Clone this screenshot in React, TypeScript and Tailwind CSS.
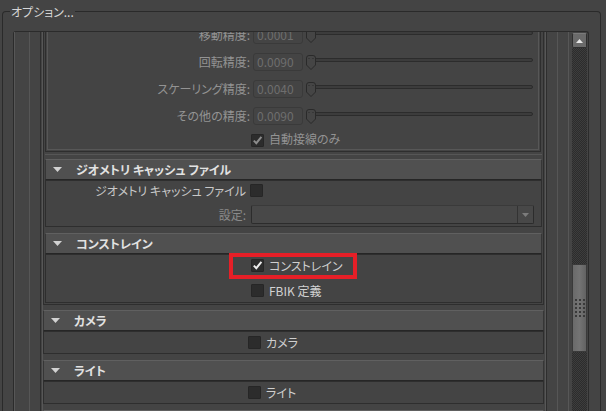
import React from "react"

const font = "font-['Noto_Sans_CJK_JP','Noto_Sans',sans-serif] [font-feature-settings:'palt']"

function Box({ checked, dim }: { checked?: boolean; dim?: boolean }) {
  return (
    <span className="flex h-[13px] w-[13px] shrink-0 items-center justify-center rounded-[1px] border border-[#262626] bg-[#2c2c2c]">
      {checked && (
        <svg width="11" height="11" viewBox="0 0 11 11">
          <path
            d="M1.8 5.6 L4.3 8.2 L9.4 1.8"
            fill="none"
            stroke={dim ? "#8c8c8c" : "#ededed"}
            strokeWidth="2"
          />
        </svg>
      )}
    </span>
  )
}

function Header({ title }: { title: string }) {
  return (
    <div className="flex h-[21px] items-center border border-[#363636] border-t-[#606060] border-b-[#262626] bg-[#505050]">
      <svg width="9" height="5" viewBox="0 0 9 5" className="ml-[7px]">
        <polygon points="0,0 9,0 4.5,5" fill="#d2d2d2" />
      </svg>
      <span className="ml-[14px] text-[12px] leading-none font-bold text-[#e2e2e2]">{title}</span>
    </div>
  )
}

function Thumb() {
  return (
    <svg width="12" height="15" viewBox="0 0 12 15" className="absolute left-0 top-[2px]">
      <path
        d="M1.5 3 Q1.5 0.5 4 0.5 H8 Q10.5 0.5 10.5 3 V10 L6 14.5 L1.5 10 Z"
        fill="#454545"
        stroke="#2a2a2a"
      />
      <rect x="3.5" y="3" width="1" height="1" fill="#2a2a2a" />
      <rect x="7.5" y="3" width="1" height="1" fill="#2a2a2a" />
    </svg>
  )
}

function PrecisionRow({ label, value }: { label: string; value: string }) {
  return (
    <div className="flex h-[27px] items-center">
      <span className="w-[202px] text-right text-[12px] leading-none text-[#939393]">{label}</span>
      <div className="ml-[3px] flex h-[18px] w-[50px] items-center rounded-[3px] border border-[#3a3a3a] pl-[3px] text-[12px] leading-none text-[#6e6e6e]">
        {value}
      </div>
      <div className="relative ml-[2px] mr-[5px] h-[18px] flex-1">
        <div className="ml-[5px] mt-[5px] h-[4px] rounded-full border border-[#2c2c2c] bg-[#3c3c3c]" />
        <Thumb />
      </div>
    </div>
  )
}

function Grip() {
  const dots = Array.from({ length: 15 })
  return (
    <div className="grid grid-cols-3 gap-[2px]">
      {dots.map((_, i) => (
        <span key={i} className="h-[2px] w-[2px] bg-[#3a3a3a]" />
      ))}
    </div>
  )
}

function ScrollBar() {
  return (
    <div className="flex w-[17px] flex-col px-[1px] pt-[1px]">
      <div className="flex h-[15px] items-center justify-center rounded-[2px] border border-[#2e2e2e] border-t-[#7a7a7a] bg-[#6a6a6a]">
        <svg width="7" height="4" viewBox="0 0 7 4">
          <polygon points="0,4 7,4 3.5,0" fill="#e6e6e6" />
        </svg>
      </div>
      <div className="h-[216px] bg-[#2f2f2f] bg-[image:repeating-conic-gradient(#2c2c2c_0_25%,#3d3d3d_0_50%)] bg-[length:2px_2px]" />
      <div className="flex h-[88px] items-center justify-center border border-[#3a3a3a] bg-[linear-gradient(90deg,#6a6a6a,#747474_50%,#626262)]">
        <Grip />
      </div>
      <div className="flex-1 bg-[#2f2f2f] bg-[image:repeating-conic-gradient(#2c2c2c_0_25%,#3d3d3d_0_50%)] bg-[length:2px_2px]" />
    </div>
  )
}

function Sections() {
  return (
    <div className="flex flex-col">
      {/* parent frame, scrolled so its top is hidden */}
      <div className="-mt-[16px] border border-[#2e2e2e] p-[1px]">
        <div className="mr-[1px] border border-[#2e2e2e] p-[1px]">
          <div className="border border-[#575757]">
            <PrecisionRow label="移動精度:" value="0.0001" />
            <PrecisionRow label="回転精度:" value="0.0090" />
            <PrecisionRow label="スケーリング精度:" value="0.0040" />
            <PrecisionRow label="その他の精度:" value="0.0090" />
            <div className="flex h-[20px] items-start pl-[203px] pt-[5px]">
              <Box checked dim />
              <span className="ml-[5px] -mt-[1px] text-[12px] leading-none text-[#939393]">自動接線のみ</span>
            </div>
          </div>
        </div>
        <div className="mt-[2px] h-[1px] bg-[#565656]" />
        <div className="mt-[4px]">
          <Header title="ジオメトリ キャッシュ ファイル" />
          <div className="border border-[#2e2e2e] pb-[2px] pt-[3px]">
            <div className="flex h-[13px] items-center">
              <span className="w-[200px] text-right text-[12px] leading-none text-[#c8c8c8]">ジオメトリ キャッシュ ファイル</span>
              <span className="ml-[4px]">
                <Box />
              </span>
            </div>
            <div className="mt-[8px] flex h-[19px] items-center">
              <span className="w-[200px] text-right text-[12px] leading-none text-[#8a8a8a]">設定:</span>
              <div className="ml-[5px] flex h-[19px] w-[283px] items-stretch rounded-[2px] border border-[#2c2c2c] border-t-[#3a3a3a] bg-[#484848]">
                <div className="flex-1" />
                <div className="flex w-[16px] items-center justify-center border-l border-[#333333]">
                  <svg width="7" height="4" viewBox="0 0 7 4">
                    <polygon points="0,0 7,0 3.5,4" fill="#7c7c7c" />
                  </svg>
                </div>
              </div>
            </div>
          </div>
        </div>
        <div className="mt-[6px]">
          <Header title="コンストレイン" />
          <div className="border border-[#2e2e2e] pb-[5px] pt-[4px] pl-[205px]">
            <div className="flex h-[13px] items-center">
              <span className="relative flex items-center">
                <Box checked />
                <span className="ml-[5px] text-[12px] leading-none text-[#cfcfcf]">コンストレイン</span>
                <span className="pointer-events-none absolute -left-[22px] -top-[6px] h-[26px] w-[128px] border-4 border-[#e61f27]" />
              </span>
            </div>
            <div className="mt-[12px] flex h-[13px] items-center">
              <Box />
              <span className="ml-[5px] text-[12px] leading-none text-[#d2d2d2]">FBIK 定義</span>
            </div>
          </div>
        </div>
      </div>

      <div className="mt-[5px]">
        <Header title="カメラ" />
        <div className="flex h-[23px] items-center border border-[#2e2e2e] pl-[204px]">
          <Box />
          <span className="ml-[5px] text-[12px] leading-none text-[#cfcfcf]">カメラ</span>
        </div>
      </div>
      <div className="mt-[6px]">
        <Header title="ライト" />
        <div className="flex h-[23px] items-center border border-[#2e2e2e] pl-[204px]">
          <Box />
          <span className="ml-[5px] text-[12px] leading-none text-[#cfcfcf]">ライト</span>
        </div>
      </div>
      <div className="mt-[6px]">
        <Header title="" />
      </div>
    </div>
  )
}

export default function App() {
  return (
    <div className={`h-[411px] w-[606px] overflow-hidden bg-[#444444] pl-[2px] pr-[5px] pt-[11px] ${font}`}>
      <div className="relative h-[420px] rounded-t-[4px] border-x border-t border-[#2a2a2a]">
        <span className="absolute -top-[7px] left-[7px] bg-[#444444] px-[1px] text-[12px] leading-[14px] text-[#d6d6d6]">
          オプション...
        </span>
        <div className="ml-[10px] mt-[19px] flex h-[400px] w-[576px] rounded-t-[3px] border-x border-t border-[#2b2b2b]">
          <div className="h-full w-[555px] overflow-hidden border-x border-[#575757]">
            <div className="ml-[14px] mr-[10px] h-full border-x border-[#565656]">
              <div className="mx-[10px] h-full border-x border-[#2e2e2e]">
                <div className="ml-[1px] h-full border-x border-[#575757]">
                  <div className="mr-[1px] h-full">
                    <Sections />
                  </div>
                </div>
              </div>
            </div>
          </div>
          <div className="w-[2px]" />
          <ScrollBar />
        </div>
      </div>
    </div>
  )
}
